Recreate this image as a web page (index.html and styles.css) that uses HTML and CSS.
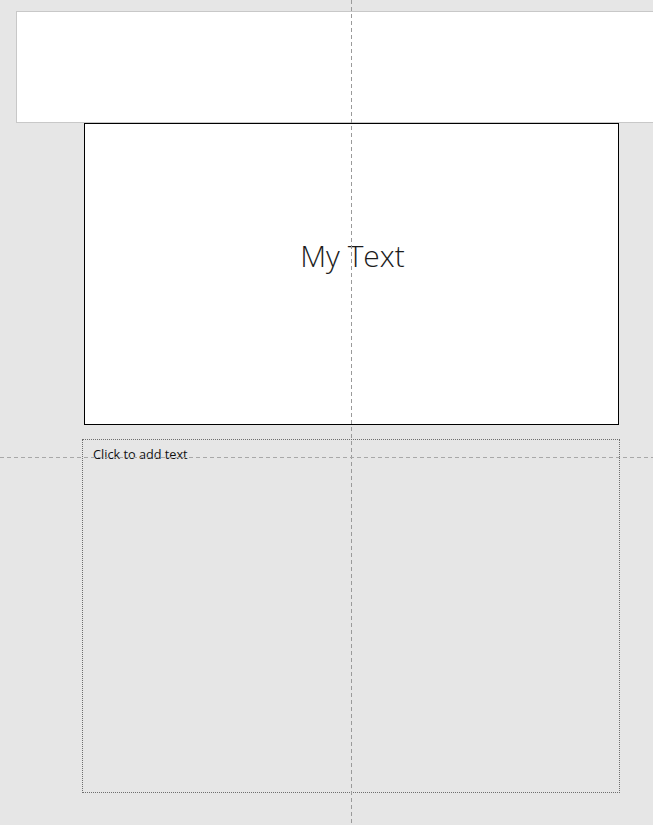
FILE: index.html
```html
<html>
  <head>
    <link rel="stylesheet" href="styles.css">
  </head>
  <body>
    <div class="view">
      <div class="header"></div>
      <div class="slide">
        <span class="title">My Text</span>
      </div>
      <div class="notes">
        <span>Click to add text</span>
      </div>
      <div class="guide guide-v"></div>
      <div class="guide guide-h"></div>
    </div>
  </body>
</html>
```

FILE: styles.css
```css
html,
body {
  margin: 0;
  background-color: #e6e6e6;
}
.view {
  position: relative;
  width: 653px;
  height: 825px;
  overflow: hidden;
  padding-top: 11px;
  box-sizing: border-box;
  font-family: "Open Sans", "Noto Sans", sans-serif;
}
.header {
  margin-left: 16px;
  height: 112px;
  box-sizing: border-box;
  border: 1px solid #c8c8c8;
  border-right: none;
  background-color: #fff;
}
.slide {
  display: flex;
  align-items: center;
  justify-content: center;
  margin-left: 84px;
  width: 535px;
  height: 302px;
  box-sizing: border-box;
  border: 1px solid #000;
  padding-bottom: 38px;
  background-color: #fff;
}
.title {
  font-size: 30px;
  font-weight: 300;
  color: #1c1c1c;
  margin-left: 2px;
}
.notes {
  margin-top: 14px;
  margin-left: 82px;
  width: 538px;
  height: 354px;
  box-sizing: border-box;
  border: 1px dotted #6e6e6e;
  padding: 5px 10px;
}
.notes span {
  font-size: 12.7px;
  color: #111;
}
.guide {
  position: absolute;
  pointer-events: none;
}
.guide-v {
  top: 0;
  bottom: 0;
  left: 351px;
  width: 1px;
  background: repeating-linear-gradient(to bottom, #9a9a9a 0 4px, transparent 4px 7px);
}
.guide-h {
  left: 0;
  right: 0;
  top: 457px;
  height: 1px;
  background: repeating-linear-gradient(to right, #a8a8a8 0 4px, transparent 4px 7px);
}
```
